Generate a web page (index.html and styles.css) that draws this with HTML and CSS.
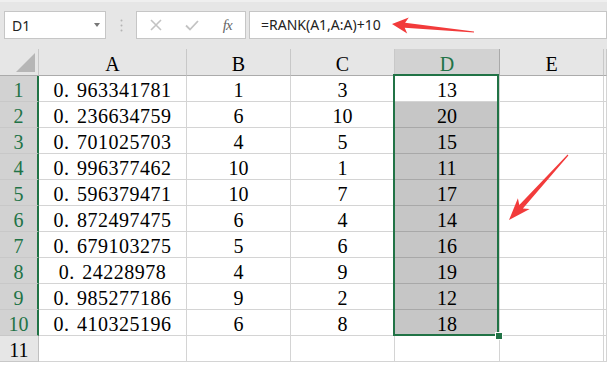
FILE: index.html
```html
<!DOCTYPE html>
<html>

<head>
  <title>RANK</title>
  <link rel="stylesheet" href="styles.css">
</head>

<body>
  <div class="toolbar">
    <div class="namebox"><span>D1</span><span class="caret"></span></div>
    <div class="dots">
      <svg width="3" height="13" viewBox="0 0 3 13"><circle cx="1.5" cy="1.5" r="1" fill="#b4b4b4"/><circle cx="1.5" cy="6.5" r="1" fill="#b4b4b4"/><circle cx="1.5" cy="11.5" r="1" fill="#b4b4b4"/></svg>
    </div>
    <div class="fxbox">
      <span class="fxbtn"><svg width="12" height="12" viewBox="0 0 12 12"><path d="M1 1 L11 11 M11 1 L1 11" stroke="#c3c3c3" stroke-width="1.6" fill="none"/></svg></span>
      <span class="fxbtn"><svg width="14" height="11" viewBox="0 0 14 11"><path d="M1 5.5 L5 9.5 L13 1" stroke="#c3c3c3" stroke-width="1.8" fill="none"/></svg></span>
      <span class="fxbtn fx">fx</span>
    </div>
    <div class="formula">=RANK(A1,A:A)+10</div>
  </div>

  <div class="sheet">
    <div class="ch corner"><svg width="38" height="26" viewBox="0 0 38 26"><polygon points="16,23 35,23 35,4" fill="#b6b6b6"/></svg></div>
    <div class="ch">A</div>
    <div class="ch">B</div>
    <div class="ch">C</div>
    <div class="ch on">D</div>
    <div class="ch">E</div>
    <div class="ch"></div>

    <div class="rh sel">1</div><div class="c a">0. 963341781</div><div class="c">1</div><div class="c">3</div><div class="c">13</div><div class="c"></div><div class="c"></div>
    <div class="rh sel">2</div><div class="c a">0. 236634759</div><div class="c">6</div><div class="c">10</div><div class="c hl">20</div><div class="c"></div><div class="c"></div>
    <div class="rh sel">3</div><div class="c a">0. 701025703</div><div class="c">4</div><div class="c">5</div><div class="c hl">15</div><div class="c"></div><div class="c"></div>
    <div class="rh sel">4</div><div class="c a">0. 996377462</div><div class="c">10</div><div class="c">1</div><div class="c hl">11</div><div class="c"></div><div class="c"></div>
    <div class="rh sel">5</div><div class="c a">0. 596379471</div><div class="c">10</div><div class="c">7</div><div class="c hl">17</div><div class="c"></div><div class="c"></div>
    <div class="rh sel">6</div><div class="c a">0. 872497475</div><div class="c">6</div><div class="c">4</div><div class="c hl">14</div><div class="c"></div><div class="c"></div>
    <div class="rh sel">7</div><div class="c a">0. 679103275</div><div class="c">5</div><div class="c">6</div><div class="c hl">16</div><div class="c"></div><div class="c"></div>
    <div class="rh sel">8</div><div class="c a">0. 24228978</div><div class="c">4</div><div class="c">9</div><div class="c hl">19</div><div class="c"></div><div class="c"></div>
    <div class="rh sel">9</div><div class="c a">0. 985277186</div><div class="c">9</div><div class="c">2</div><div class="c hl">12</div><div class="c"></div><div class="c"></div>
    <div class="rh sel">10</div><div class="c a">0. 410325196</div><div class="c">6</div><div class="c">8</div><div class="c hl">18</div><div class="c"></div><div class="c"></div>
    <div class="rh">11</div><div class="c"></div><div class="c"></div><div class="c"></div><div class="c"></div><div class="c"></div><div class="c"></div>

    <div class="selection"></div>
    <div class="handle"></div>
  </div>

  <svg class="arrows" width="607" height="365" viewBox="0 0 607 365">
    <polygon points="392,24 408.8,17.5 405.1,22.8 474,31.5 474,32.5 404.7,27.8 407.2,33.5" fill="#f23b3b"/>
    <polygon points="509,220 529.7,209.1 522.9,208.4 568.4,155.4 567.6,154.6 519.3,205 517.9,198.3" fill="#f23b3b"/>
  </svg>
</body>

</html>
```

FILE: styles.css
```css
body{
    margin: 0;
    width: 607px;
    height: 365px;
    overflow: hidden;
    position: relative;
    background-color: white;
    font-family: "Liberation Serif", serif;
}

.toolbar{
    display: flex;
    align-items: flex-start;
    height: 49px;
    box-sizing: border-box;
    padding-top: 11px;
    background-color: #e6e6e6;
    box-shadow: inset 0 2px 0 #efefef;
    font-family: "Noto Sans", sans-serif;
    font-size: 14px;
    color: #222;
}

.namebox{
    margin-left: 4px;
    width: 102px;
    height: 28px;
    box-sizing: border-box;
    border: 1px solid #c6c6c6;
    background-color: white;
    display: flex;
    align-items: center;
    justify-content: space-between;
    padding: 0 5px 0 7px;
}

.caret{
    width: 0;
    height: 0;
    border-left: 3.5px solid transparent;
    border-right: 3.5px solid transparent;
    border-top: 4px solid #777;
}

.dots{
    width: 30px;
    height: 28px;
    display: flex;
    justify-content: center;
    align-items: center;
}

.fxbox{
    width: 110px;
    height: 28px;
    box-sizing: border-box;
    border: 1px solid #c6c6c6;
    background-color: white;
    display: flex;
    align-items: center;
    padding-left: 1px;
}

.fxbtn{
    width: 36px;
    display: flex;
    justify-content: center;
    align-items: center;
}

.fx{
    font-family: "Liberation Serif", serif;
    font-style: italic;
    font-size: 15px;
    color: #666;
    letter-spacing: -1px;
}

.formula{
    flex: 1;
    margin-left: 3px;
    height: 28px;
    box-sizing: border-box;
    border: 1px solid #c6c6c6;
    background-color: white;
    padding-left: 11px;
    line-height: 25px;
}

.sheet{
    position: relative;
    display: grid;
    grid-template-columns: 39px 148px 104px 104px 105px 104px 1fr;
    grid-template-rows: 27px repeat(11, 26px);
    font-size: 20px;
}

.ch{
    background-color: #e6e6e6;
    border-right: 1px solid #c8c8c8;
    border-bottom: 1px solid #ababab;
    text-align: center;
    line-height: 30px;
    overflow: hidden;
}

.ch.on{
    background-color: #d2d2d2;
    color: #217346;
    border-right-color: #a9a9a9;
}

.corner svg{
    display: block;
}

.rh{
    background-color: #e6e6e6;
    border-right: 1px solid #c0c0c0;
    border-bottom: 1px solid #c8c8c8;
    text-align: center;
    line-height: 28px;
}

.rh.sel{
    background-color: #d2d2d2;
    color: #217346;
    border-right: 2px solid #217346;
}

.c{
    border-right: 1px solid #d4d4d4;
    border-bottom: 1px solid #d4d4d4;
    text-align: center;
    line-height: 28px;
    white-space: nowrap;
}

.c.a{
    word-spacing: 2px;
    letter-spacing: 0.5px;
}

.c.hl{
    background-color: #c6c6c6;
    border-bottom-color: #a8a8a8;
}

.selection{
    position: absolute;
    left: 393px;
    top: 25px;
    width: 106px;
    height: 262px;
    box-sizing: border-box;
    border: 2px solid #217346;
    pointer-events: none;
}

.handle{
    position: absolute;
    left: 496px;
    top: 284px;
    width: 6px;
    height: 6px;
    background-color: #217346;
    box-shadow: 0 0 0 1px white;
}

.arrows{
    position: absolute;
    left: 0;
    top: 0;
    pointer-events: none;
}
```
